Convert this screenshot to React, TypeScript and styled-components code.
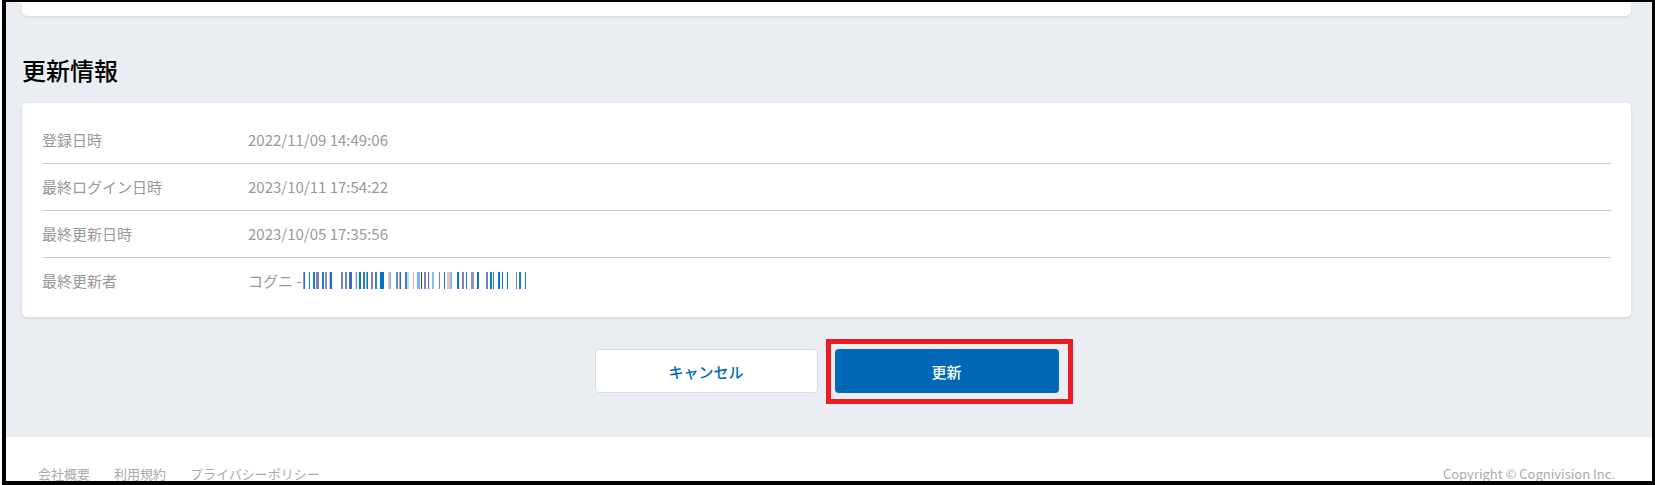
import * as React from "react";
import styled, { createGlobalStyle } from "styled-components";

const GlobalStyle = createGlobalStyle`
  html, body {
    margin: 0;
    padding: 0;
    background: #fff;
  }
  * {
    box-sizing: border-box;
  }
`;

const rows = [
  { label: "登録日時", value: "2022/11/09 14:49:06" },
  { label: "最終ログイン日時", value: "2023/10/11 17:54:22" },
  { label: "最終更新日時", value: "2023/10/05 17:35:56" },
];

const footerLinks = ["会社概要", "利用規約", "プライバシーポリシー"];

// [x, width, colour] of the scrambled part of the user name
const maskedName: [number, number, string][] = [
  [3, 1, "#a58bc4"], [4, 1, "#0a78d0"], [8.5, 1.5, "#0a84d8"], [13, 1.5, "#0a84d8"],
  [16, 3, "#8d7ab8"], [21.5, 2, "#2f6fc0"], [25, 2, "#7a8fd0"], [29, 1, "#f0b8b8"],
  [30, 2, "#0a78d0"], [41, 2, "#8d7ab8"], [45, 2, "#5a8fc8"], [49, 2.5, "#4a6cc0"],
  [54.5, 1, "#f0c8c8"], [55.5, 1, "#5ab0e8"], [59, 2, "#0a78d0"], [63, 1.5, "#4a6cc0"],
  [66, 1, "#5ab0e8"], [67, 1, "#0a8a9a"], [71, 2, "#8d7ab8"], [75, 2, "#3a80d0"],
  [80, 3.5, "#0070c8"], [87.5, 2, "#f0b8c0"], [89.5, 1, "#6ab8f0"], [96, 2, "#5a8fc8"],
  [99, 1, "#e0a090"], [100, 1, "#0a78d0"], [105, 1.5, "#3a80d0"], [106.5, 2.5, "#c4d8ec"],
  [113, 1, "#eeb0c0"], [117, 2.5, "#7ab8ec"], [121, 1, "#444466"], [124, 2, "#8d7ab8"],
  [128, 1, "#4a6cc0"], [132, 2, "#8abcec"], [139, 1, "#8d7ab8"], [143.5, 1.5, "#0a78d0"],
  [147, 3, "#eec0c0"], [150, 2, "#8abcec"], [157, 1.5, "#0a78d0"], [162, 1.5, "#8d7ab8"],
  [166, 1, "#0a84d8"], [171, 3, "#a090c8"], [177, 1.5, "#0a78d0"], [186, 1.5, "#6a80d0"],
  [189.5, 2, "#0a78d0"], [192.5, 1, "#2f6fc0"], [198, 1.5, "#0a78d0"], [202, 1, "#0a78d0"],
  [207, 1, "#0a78d0"], [216, 1, "#8d7ab8"], [219, 2, "#0a84d8"], [225, 1, "#0a78d0"],
];

const MaskedName = () => (
  <NameMask width="232" height="17" viewBox="2 0 232 17" shapeRendering="crispEdges">
    {maskedName.map(([x, w, c]) => (
      <rect key={x} x={x} y="0" width={w} height="17" fill={c} />
    ))}
  </NameMask>
);

const App: React.FC = () => {
  return (
    <Screen>
      <GlobalStyle />
      <Main>
        <TopCardEnd />
        <Title>更新情報</Title>
        <InfoCard>
          {rows.map(row => (
            <InfoRow key={row.label}>
              <Label>{row.label}</Label>
              <Value>{row.value}</Value>
            </InfoRow>
          ))}
          <InfoRow>
            <Label>最終更新者</Label>
            <Value>
              コグニ -
              <MaskedName />
            </Value>
          </InfoRow>
        </InfoCard>
        <Actions>
          <CancelButton>キャンセル</CancelButton>
          <SubmitWrapper>
            <SubmitButton>更新</SubmitButton>
            <Highlight />
          </SubmitWrapper>
        </Actions>
      </Main>
      <Footer>
        <FooterLinks>
          {footerLinks.map(link => (
            <FooterLink key={link}>{link}</FooterLink>
          ))}
        </FooterLinks>
        <Copyright>Copyright © Cognivision Inc.</Copyright>
      </Footer>
    </Screen>
  );
};

const Screen = styled.div`
  width: 1653px;
  height: 485px;
  margin-left: 2px;
  overflow: hidden;
  border-style: solid;
  border-color: #000;
  border-width: 2px 3px 4px 4px;
  font-family: "Noto Sans CJK JP", "Noto Sans", sans-serif;
  background: #fff;
`;

const Main = styled.main`
  height: 435px;
  padding: 0 21px 0 16px;
  background: #eaedf2;
`;

const TopCardEnd = styled.div`
  height: 14px;
  background: #fff;
  border-radius: 0 0 5px 5px;
  box-shadow: 0 1px 3px rgba(0, 0, 0, 0.1);
`;

const Title = styled.h2`
  margin: 0;
  height: 87px;
  padding-top: 36px;
  font-size: 24px;
  line-height: 35px;
  font-weight: 500;
  color: #000;
`;

const InfoCard = styled.section`
  height: 214px;
  padding: 14px 20px 12px;
  background: #fff;
  border-radius: 5px;
  box-shadow: 0 1px 3px rgba(0, 0, 0, 0.12);
`;

const InfoRow = styled.div`
  display: flex;
  align-items: center;
  height: 47px;
  padding-bottom: 2px;
  border-bottom: 1px solid #ccc;

  &:last-child {
    border-bottom: none;
  }
`;

const Label = styled.div`
  width: 206px;
  font-size: 15px;
  color: #999;
`;

const Value = styled.div`
  display: flex;
  align-items: center;
  font-size: 15px;
  color: #999;
`;

const NameMask = styled.svg`
  display: block;
`;

const Actions = styled.div`
  display: flex;
  justify-content: center;
  gap: 17px;
  margin-top: 32px;
`;

const CancelButton = styled.button`
  width: 223px;
  height: 44px;
  padding: 0;
  background: #fff;
  border: 1px solid #d9dde3;
  border-radius: 4px;
  font-family: inherit;
  font-size: 15px;
  font-weight: 500;
  color: #0068b7;
`;

const SubmitWrapper = styled.div`
  position: relative;
  width: 224px;
  height: 44px;
`;

const SubmitButton = styled.button`
  display: block;
  width: 100%;
  height: 100%;
  padding: 0;
  background: #0068b7;
  border: none;
  border-radius: 4px;
  font-family: inherit;
  font-size: 15px;
  font-weight: 500;
  color: #fff;
`;

const Highlight = styled.div`
  position: absolute;
  top: -10px;
  left: -9px;
  right: -14px;
  bottom: -11px;
  border: 5px solid #ed1c24;
`;

const Footer = styled.footer`
  display: flex;
  justify-content: space-between;
  padding: 27px 37px 0 32px;
  font-size: 13px;
  line-height: 20px;
  color: #aaa;
`;

const FooterLinks = styled.nav`
  display: flex;
  gap: 24px;
`;

const FooterLink = styled.span``;

const Copyright = styled.span``;

export default App;
